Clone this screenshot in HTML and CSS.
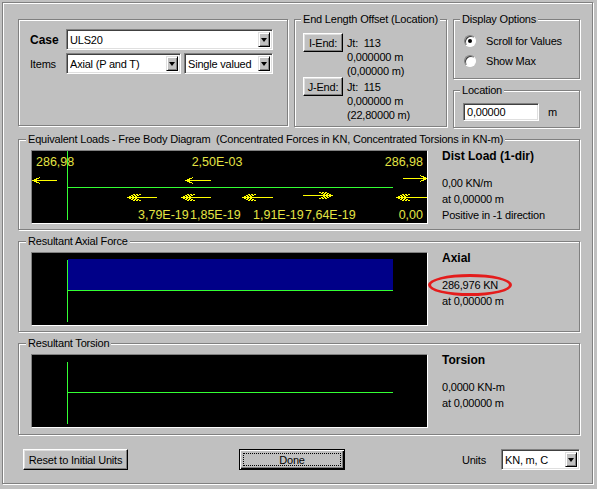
FILE: index.html
```html
<!DOCTYPE html>
<html lang="en">
<head>
    <meta charset="UTF-8">
    <title>Frame Forces</title>
    <link rel="stylesheet" href="styles.css">
</head>
<body>
<div class="window">
    <div class="top-row">
        <div class="group case-group">
            <div class="field-row">
                <span class="field-label case-label">Case</span>
                <div class="combo case-combo"><span class="combo-text">ULS20</span><span class="drop"></span></div>
            </div>
            <div class="field-row">
                <span class="field-label">Items</span>
                <div class="combo items-combo"><span class="combo-text">Axial (P and T)</span><span class="drop"></span></div>
                <div class="combo valued-combo"><span class="combo-text">Single valued</span><span class="drop"></span></div>
            </div>
        </div>

        <div class="group end-group">
            <div class="legend">End Length Offset (Location)</div>
            <div class="end-row">
                <button class="btn end-btn">I-End:</button>
                <div class="end-text">Jt:&nbsp;&nbsp;113<br>0,000000 m<br>(0,00000 m)</div>
            </div>
            <div class="end-row">
                <button class="btn end-btn">J-End:</button>
                <div class="end-text">Jt:&nbsp;&nbsp;115<br>0,000000 m<br>(22,80000 m)</div>
            </div>
        </div>

        <div class="side-col">
            <div class="group display-group">
                <div class="legend">Display Options</div>
                <div class="radio-row"><span class="radio checked"></span>Scroll for Values</div>
                <div class="radio-row"><span class="radio"></span>Show Max</div>
            </div>
            <div class="group location-group">
                <div class="legend">Location</div>
                <div class="location-row">
                    <div class="edit">0,00000</div>
                    <span class="unit">m</span>
                </div>
            </div>
        </div>
    </div>

    <div class="group panel">
        <div class="legend">Equivalent Loads - Free Body Diagram&nbsp; (Concentrated Forces in KN, Concentrated Torsions in KN-m)</div>
        <div class="panel-body">
            <div class="canvas">
                <svg class="plot" width="395" height="72" viewBox="0 0 395 72">
                    <path class="beam" d="M35.5 0V69M35 36.5H361"/>
                    <g class="arrows">
                        <path d="M1 29.5H25M8 26.5L1 29.5L8 32.5"/>
                        <path d="M154 29.5H179M161 26.5L154 29.5L161 32.5"/>
                        <path d="M371 27.5H395M388 24.5L395 27.5L388 30.5"/>
                        <path d="M96 46.5H125M103 43L96 46.5L103 50M106 43L99 46.5L106 50M109 43L102 46.5L109 50"/>
                        <path d="M150 46.5H179M157 43L150 46.5L157 50M160 43L153 46.5L160 50M163 43L156 46.5L163 50"/>
                        <path d="M211 46.5H241M218 43L211 46.5L218 50M221 43L214 46.5L221 50M224 43L217 46.5L224 50"/>
                        <path d="M271 44.5H300M293 41L300 44.5L293 48M290 41L297 44.5L290 48M287 41L294 44.5L287 48"/>
                        <path d="M365 46.5H395M372 43L365 46.5L372 50M375 43L368 46.5L375 50M378 43L371 46.5L378 50"/>
                    </g>
                    <g class="values">
                        <text x="4" y="14.5">286,98</text>
                        <text x="185" y="14.5" text-anchor="middle">2,50E-03</text>
                        <text x="391" y="14.5" text-anchor="end">286,98</text>
                        <text x="106" y="67.5">3,79E-19</text>
                        <text x="158" y="67.5">1,85E-19</text>
                        <text x="221" y="67.5">1,91E-19</text>
                        <text x="273" y="67.5">7,64E-19</text>
                        <text x="391" y="67.5" text-anchor="end">0,00</text>
                    </g>
                </svg>
            </div>
            <div class="info">
                <div class="info-title">Dist Load (1-dir)</div>
                <div class="info-lines">0,00 KN/m<br>at 0,00000 m<br>Positive in -1 direction</div>
            </div>
        </div>
    </div>

    <div class="group panel">
        <div class="legend">Resultant Axial Force</div>
        <div class="panel-body">
            <div class="canvas">
                <svg class="plot" width="395" height="72" viewBox="0 0 395 72">
                    <rect x="36" y="6" width="325" height="31" fill="#000088"/>
                    <path class="beam" d="M35.5 7V69M36 37.5H361"/>
                </svg>
            </div>
            <div class="info">
                <div class="info-title">Axial</div>
                <div class="info-lines">286,976 KN<br>at 0,00000 m</div>
                <div class="ellipse"></div>
            </div>
        </div>
    </div>

    <div class="group panel torsion-panel">
        <div class="legend">Resultant Torsion</div>
        <div class="panel-body">
            <div class="canvas">
                <svg class="plot" width="395" height="72" viewBox="0 0 395 72">
                    <path class="beam" d="M35.5 7V69M36 37.5H361"/>
                </svg>
            </div>
            <div class="info">
                <div class="info-title">Torsion</div>
                <div class="info-lines">0,0000 KN-m<br>at 0,00000 m</div>
            </div>
        </div>
    </div>

    <div class="footer">
        <button class="btn reset-btn">Reset to Initial Units</button>
        <button class="btn done-btn">Done</button>
        <span class="units-label">Units</span>
        <div class="combo units-combo"><span class="combo-text">KN, m, C</span><span class="drop"></span></div>
    </div>
</div>
</body>
</html>
```

FILE: styles.css
```css
body {
    margin: 0;
    width: 597px;
    height: 489px;
    overflow: hidden;
    background: #c0c0c0;
    font-family: "Liberation Sans", Arial, sans-serif;
    font-size: 11px;
    letter-spacing: -0.2px;
    color: #000;
}

/* etched frames */
.window {
    box-sizing: border-box;
    width: 591px;
    height: 482px;
    margin: 2px 0 0 2px;
    padding: 16px 12px 0 15px;
    border: 1px solid #808080;
    box-shadow: inset 1px 1px 0 #fff, 1px 1px 0 #fff;
}
.group {
    box-sizing: border-box;
    border: 1px solid #808080;
    box-shadow: inset 1px 1px 0 #fff, 1px 1px 0 #fff;
}
.legend {
    width: fit-content;
    margin: -7px 0 0 var(--legend-x, 6px);
    padding: 0 2px;
    line-height: 13px;
    white-space: nowrap;
    background: #c0c0c0;
}

/* controls */
.combo {
    box-sizing: border-box;
    display: flex;
    align-items: center;
    height: 21px;
    padding: 0 2px 0 3px;
    background: #fff;
    border: 1px solid;
    border-color: #808080 #fff #fff #808080;
    box-shadow: inset 1px 1px 0 #404040, inset -1px -1px 0 #dfdfdf;
}
.combo-text {
    flex: 1;
    overflow: hidden;
    white-space: nowrap;
}
.drop {
    box-sizing: border-box;
    display: flex;
    align-items: center;
    justify-content: center;
    width: 12px;
    height: 15px;
    background: #c0c0c0;
    border: 1px solid;
    border-color: #dfdfdf #000 #000 #dfdfdf;
    box-shadow: inset 1px 1px 0 #fff, inset -1px -1px 0 #808080;
}
.drop::after {
    content: "";
    border-style: solid;
    border-width: 4px 3px 0;
    border-color: #000 transparent transparent;
}
.btn {
    box-sizing: border-box;
    height: 21px;
    padding: 0;
    font: inherit;
    letter-spacing: inherit;
    color: #000;
    background: #c0c0c0;
    border: 1px solid;
    border-color: #fff #000 #000 #fff;
    box-shadow: inset -1px -1px 0 #808080, inset 1px 1px 0 #dfdfdf;
}
.edit {
    box-sizing: border-box;
    width: 76px;
    height: 18px;
    padding-left: 3px;
    line-height: 16px;
    background: #fff;
    border: 1px solid;
    border-color: #808080 #fff #fff #808080;
    box-shadow: inset 1px 1px 0 #404040, inset -1px -1px 0 #dfdfdf;
}
.radio {
    position: relative;
    box-sizing: border-box;
    width: 12px;
    height: 12px;
    margin-right: 10px;
    border-radius: 50%;
    background: #fff;
    border: 1px solid;
    border-color: #808080 #fff #fff #808080;
    box-shadow: inset 1px 1px 0 #404040;
}
.radio.checked::after {
    content: "";
    position: absolute;
    left: 3px;
    top: 3px;
    width: 4px;
    height: 4px;
    border-radius: 50%;
    background: #000;
}

/* top row */
.top-row {
    display: flex;
    align-items: flex-start;
    gap: 6px;
}
.case-group {
    width: 270px;
    height: 107px;
    padding: 9px 0 0 11px;
}
.field-row {
    display: flex;
    align-items: center;
    gap: 3px;
}
.field-row + .field-row { margin-top: 3px; }
.field-label { width: 33px; }
.case-label {
    font-weight: bold;
    font-size: 12px;
    letter-spacing: 0;
}
.case-combo { width: 207px; }
.items-combo { width: 115px; }
.valued-combo { width: 89px; }

.end-group {
    --legend-x: -2px;
    width: 153px;
    height: 108px;
    padding-left: 8px;
}
.end-row {
    display: flex;
    align-items: flex-start;
    height: 44px;
}
.legend + .end-row { margin-top: 7px; }
.end-btn {
    width: 40px;
    height: 19px;
}
.end-text {
    margin-left: 4px;
    padding-top: 3px;
    line-height: 14px;
    white-space: nowrap;
}

.side-col {
    display: flex;
    flex-direction: column;
    width: 127px;
}
.display-group {
    --legend-x: -4px;
    height: 60px;
    padding-left: 10px;
}
.radio-row {
    display: flex;
    align-items: center;
    height: 16px;
    margin-top: 4px;
}
.legend + .radio-row { margin-top: 7px; }
.location-group {
    --legend-x: -3px;
    height: 38px;
    margin-top: 11px;
    padding-left: 9px;
}
.location-row {
    display: flex;
    align-items: center;
    margin-top: 6px;
}
.unit { margin-left: 9px; }

/* diagram panels */
.panel {
    --legend-x: -5px;
    height: 91px;
    margin-top: 11px;
    padding-left: 12px;
}
.torsion-panel { height: 92px; }
.panel-body {
    display: flex;
    align-items: flex-start;
    margin-top: 4px;
}
.canvas {
    box-sizing: border-box;
    width: 397px;
    height: 74px;
    background: #000;
    border: 1px solid;
    border-color: #808080 #fff #fff #808080;
}
.plot {
    display: block;
    font-family: "Liberation Sans", Arial, sans-serif;
    font-size: 12.5px;
    letter-spacing: 0;
}
.beam {
    fill: none;
    stroke: #33ff33;
    stroke-width: 1;
    shape-rendering: crispEdges;
}
.arrows path {
    fill: none;
    stroke: #ffff00;
    stroke-width: 1;
    shape-rendering: crispEdges;
}
.values { fill: #e4e444; }

.info {
    position: relative;
    margin: -1px 0 0 14px;
    white-space: nowrap;
}
.info-title {
    font-weight: bold;
    font-size: 12px;
    line-height: 14px;
    letter-spacing: 0;
}
.info-lines {
    margin-top: 12px;
    line-height: 16px;
}
.ellipse {
    position: absolute;
    left: -14px;
    top: 23px;
    box-sizing: border-box;
    width: 84px;
    height: 22px;
    border: 3px solid #e41c1c;
    border-radius: 50%;
}

/* bottom buttons */
.footer {
    display: flex;
    align-items: center;
    height: 21px;
    margin-top: 14px;
    padding-left: 5px;
}
.reset-btn { width: 105px; }
.done-btn {
    position: relative;
    width: 106px;
    margin-left: 111px;
    border-color: #000;
    box-shadow: inset 1px 1px 0 #fff, inset -1px -1px 0 #000, inset -2px -2px 0 #808080;
}
.done-btn::after {
    content: "";
    position: absolute;
    inset: 3px;
    border: 1px dotted #000;
}
.units-label { margin-left: auto; }
.units-combo {
    width: 79px;
    margin-left: 15px;
}
```
